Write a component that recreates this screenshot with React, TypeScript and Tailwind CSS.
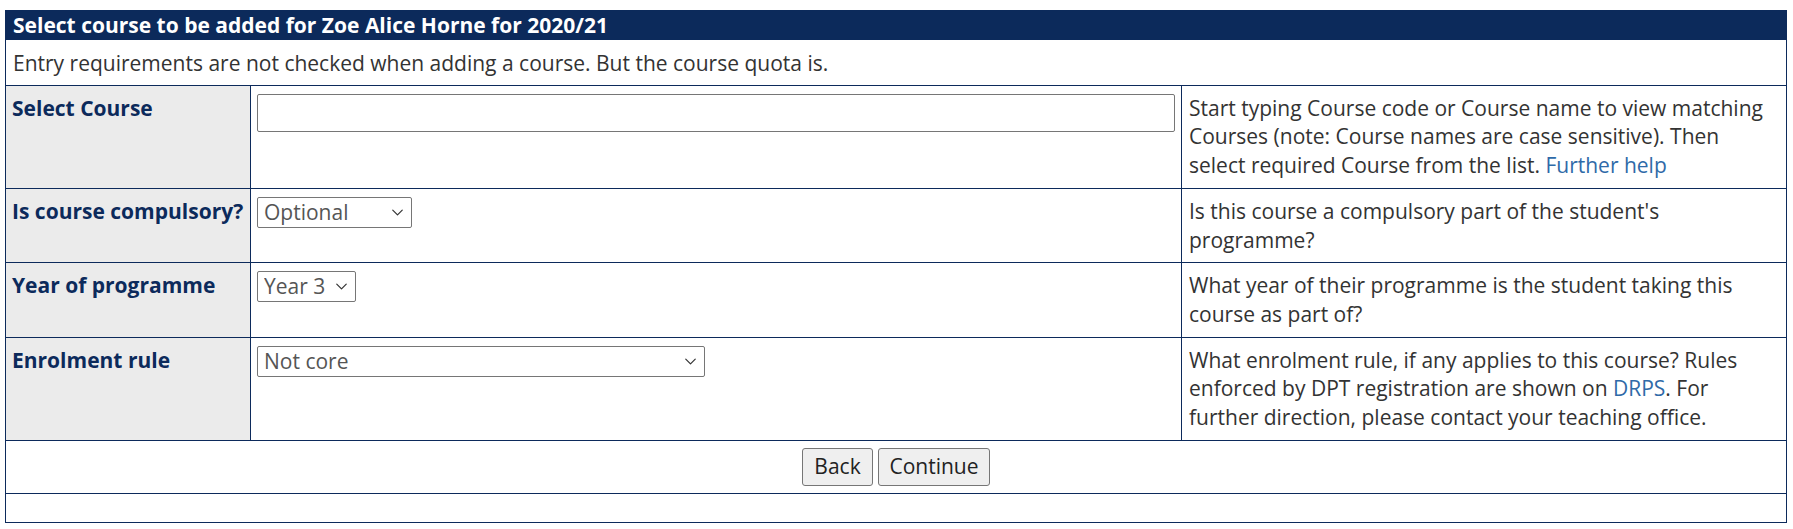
import { ChevronDown } from 'lucide-react';

// Labels + help text for the form rows
const navy = 'text-[#0c2a5b]';

function Select({ value, width }: { value: string; width: string }) {
  return (
    <div className={`relative inline-block ${width}`}>
      <select
        defaultValue={value}
        className="h-[31px] w-full appearance-none rounded-[2px] border border-[#767676] bg-white pl-[6px] pr-[24px] text-[21px] leading-[29px] text-[#555]"
      >
        <option>{value}</option>
      </select>
      <ChevronDown
        size={19}
        strokeWidth={1.5}
        className="pointer-events-none absolute right-[5px] top-[6px] text-[#333]"
      />
    </div>
  );
}

export default function App() {
  const rows = [
    {
      label: 'Select Course',
      field: (
        <input
          type="text"
          className="block h-[38px] w-full rounded-[2px] border border-[#767676] bg-white"
        />
      ),
      help: (
        <>
          Start typing Course code or Course name to view matching Courses (note: Course names are
          case sensitive). Then select required Course from the list.{' '}
          <a className="text-[#2f6aa8]">Further help</a>
        </>
      ),
    },
    {
      label: 'Is course compulsory?',
      field: <Select value="Optional" width="w-[155px]" />,
      help: <>Is this course a compulsory part of the student's<br />programme?</>,
    },
    {
      label: 'Year of programme',
      field: <Select value="Year 3" width="w-[99px]" />,
      help: <>What year of their programme is the student taking this course as part of?</>,
    },
    {
      label: 'Enrolment rule',
      field: <Select value="Not core" width="w-[448px]" />,
      help: (
        <>
          What enrolment rule, if any applies to this course? Rules enforced by DPT registration are
          shown on <a className="text-[#2f6aa8]">DRPS</a>. For further direction, please contact
          your teaching office.
        </>
      ),
    },
  ];

  return (
    <div className="min-h-screen bg-white pl-[5px] pt-[10px] font-['Open_Sans',sans-serif] text-[21px] leading-[28.7px] text-[#333]">
      <table className="w-[1781px] table-fixed border-collapse border border-[#0c2a5b]">
        <colgroup>
          <col className="w-[245px]" />
          <col className="w-[931px]" />
          <col className="w-[605px]" />
        </colgroup>
        <tbody>
          <tr>
            <th
              colSpan={3}
              className="bg-[#0c2a5b] px-[7px] py-0 text-left font-bold leading-[29px] text-white"
            >
              Select course to be added for Zoe Alice Horne for 2020/21
            </th>
          </tr>
          <tr>
            <td colSpan={3} className="border-b border-[#0c2a5b] px-[7px] pt-[9px] pb-[7px]">
              Entry requirements are not checked when adding a course. But the course quota is.
            </td>
          </tr>

          {rows.map((row) => (
            <tr key={row.label}>
              <td
                className={`whitespace-nowrap border border-[#0c2a5b] bg-[#ebebeb] pl-[6px] pr-0 py-[8px] align-top font-bold ${navy}`}
              >
                {row.label}
              </td>
              <td className="border border-[#0c2a5b] px-[6px] py-[8px] align-top">{row.field}</td>
              <td className="border border-[#0c2a5b] px-[7px] py-[8px] align-top">{row.help}</td>
            </tr>
          ))}

          <tr>
            <td colSpan={3} className="border border-[#0c2a5b] py-[7px] text-center">
              <div className="flex justify-center gap-[5px]">
                <button className="h-[38px] w-[71px] rounded-[3px] border border-[#767676] bg-[#efefef] text-[21px] text-[#222]">
                  Back
                </button>
                <button className="h-[38px] w-[112px] rounded-[3px] border border-[#767676] bg-[#efefef] text-[21px] text-[#222]">
                  Continue
                </button>
              </div>
            </td>
          </tr>
          <tr>
            <td colSpan={3} className="h-[29px] border border-[#0c2a5b]"></td>
          </tr>
        </tbody>
      </table>
    </div>
  );
}
